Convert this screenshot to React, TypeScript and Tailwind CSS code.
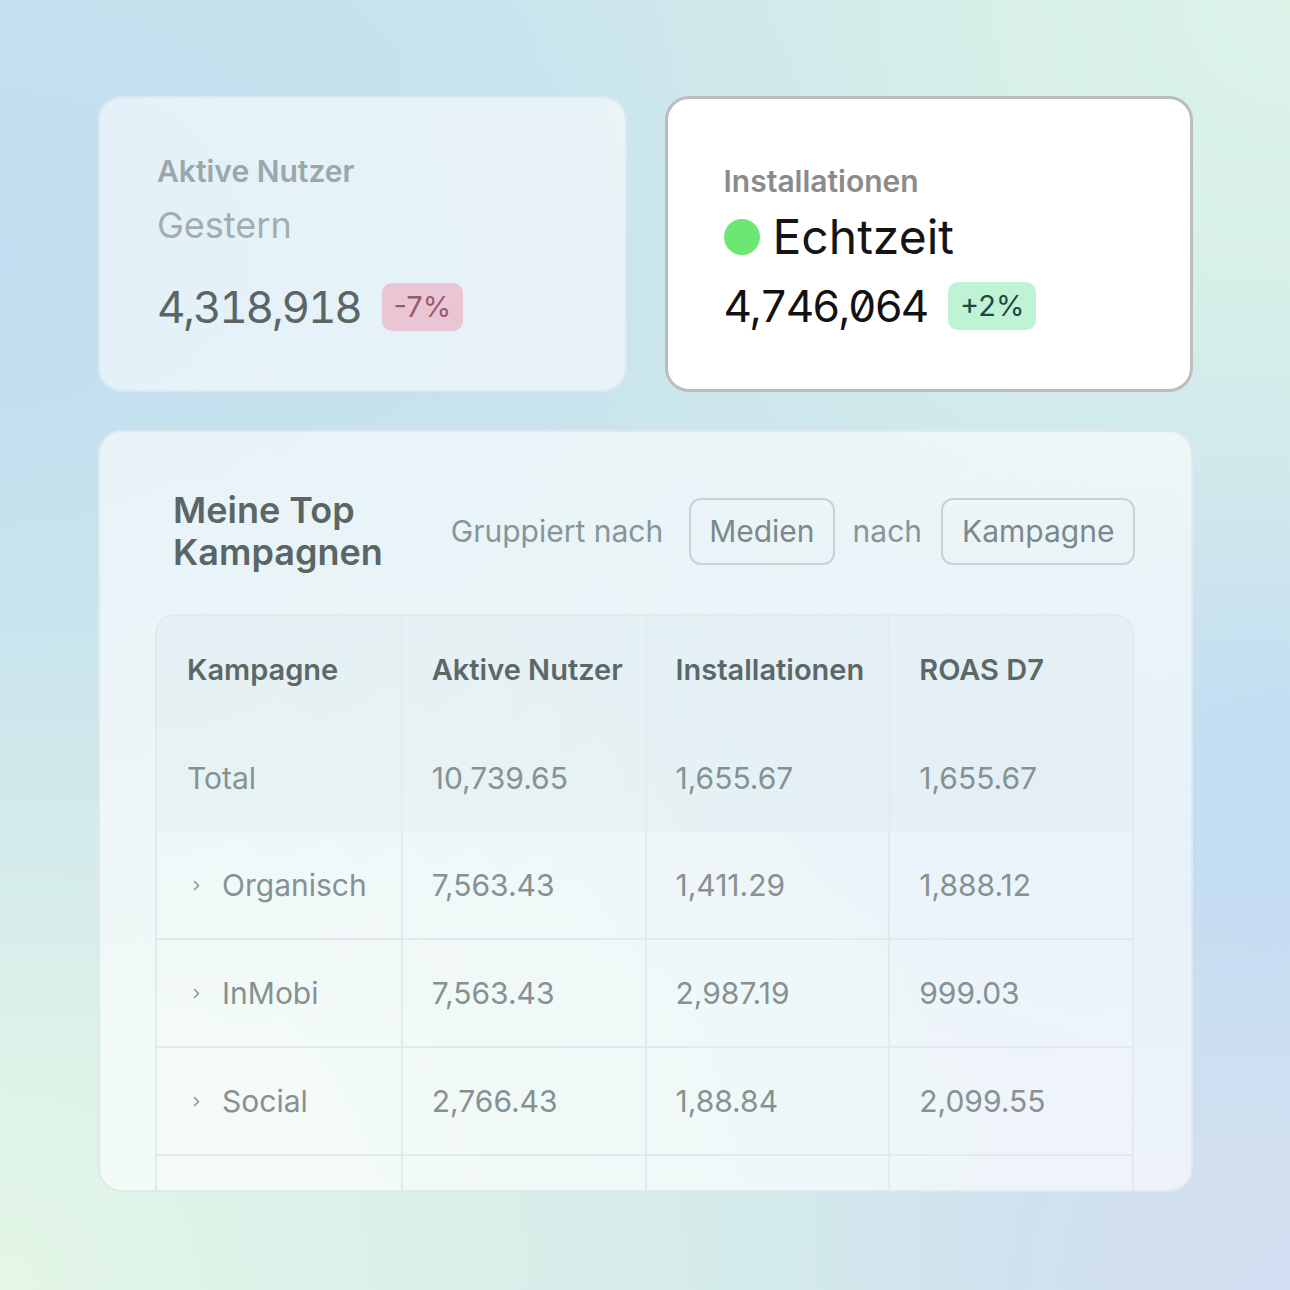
import React from "react";

const Chevron = () => (
  <svg viewBox="0 0 7 11" className="w-[7px] h-[11px] mr-[22px] shrink-0" fill="none">
    <path d="M1.5 1.5 L5.5 5.5 L1.5 9.5" stroke="#8a9597" strokeWidth="1.6" strokeLinecap="round" strokeLinejoin="round" />
  </svg>
);

const rows = [
  { name: "Organisch", a: "7,563.43", b: "1,411.29", c: "1,888.12" },
  { name: "InMobi", a: "7,563.43", b: "2,987.19", c: "999.03" },
  { name: "Social", a: "2,766.43", b: "1,88.84", c: "2,099.55" },
  { name: "", a: "", b: "", c: "" },
];

export default function App() {
  return (
    <div className="w-[1290px] h-[1290px] overflow-hidden font-['Inter',sans-serif] bg-[radial-gradient(ellipse_at_0%_20%,#c1def0_0%,transparent_55%),radial-gradient(ellipse_at_100%_0%,#dbf3e7_0%,transparent_50%),radial-gradient(ellipse_at_0%_100%,#e3f6e7_0%,transparent_55%),radial-gradient(ellipse_at_100%_55%,#bdd7f5_0%,transparent_45%),radial-gradient(ellipse_at_100%_100%,#d3dcf1_0%,transparent_30%),linear-gradient(#cee7ec,#cee7ec)] pt-[96px] pl-[98px] pr-[97px]">
      <div className="grid grid-cols-2 gap-[38px]">
        {/* Card 1 */}
        <div className="h-[296px] rounded-[24px] border-2 border-[#dae9ef] bg-white/55 pl-[57px] pt-[55px] flex flex-col">
          <div className="text-[30px] leading-[36px] font-semibold text-[#9ca7aa]">Aktive Nutzer</div>
          <div className="mt-[14px] text-[36px] leading-[44px] text-[#a3adb0]">Gestern</div>
          <div className="mt-[36px] flex items-center">
            <span className="text-[44px] leading-[48px] tracking-[-0.05em] tabular-nums text-[#5b6566]">4,318,918</span>
            <span className="ml-[21px] h-[48px] px-[12px] rounded-[10px] bg-[#eac5d3] text-[#9b5a72] text-[29px] flex items-center">-7%</span>
          </div>
        </div>
        {/* Card 2 */}
        <div className="h-[296px] rounded-[24px] border-[3px] border-[#bdbdbd] bg-white pl-[56px] pt-[64px] flex flex-col">
          <div className="text-[30px] leading-[36px] font-semibold text-[#8b8b8b]">Installationen</div>
          <div className="mt-[10px] flex items-center">
            <span className="w-[36px] h-[36px] rounded-full bg-[#6ce872] mr-[13px]" />
            <span className="text-[48px] leading-[56px] text-[#151515]">Echtzeit</span>
          </div>
          <div className="mt-[17px] flex items-center">
            <span className="text-[44px] leading-[48px] tracking-[-0.05em] tabular-nums slashed-zero text-[#121212]">4,746,064</span>
            <span className="ml-[21px] h-[48px] px-[12px] rounded-[10px] bg-[#bff3d6] text-[#1d4a3e] text-[29px] flex items-center">+2%</span>
          </div>
        </div>
      </div>

      {/* Main card */}
      <div className="mt-[38px] h-[762px] overflow-hidden rounded-[24px] border-2 border-[#dde9ee] bg-white/60 pl-[55px] pr-[57px] pt-[57px]">
        <div className="flex items-center pl-[18px] whitespace-nowrap">
          <div className="shrink-0 text-[36px] leading-[42px] font-semibold text-[#5a6666]">
            Meine Top
            <br />
            Kampagnen
          </div>
          <span className="shrink-0 ml-[68px] text-[30px] text-[#87949a]">Gruppiert nach</span>
          <span className="shrink-0 ml-[26px] h-[67px] px-[18px] rounded-[12px] border-2 border-[#c6d2d5] text-[30px] text-[#7b898c] flex items-center">Medien</span>
          <span className="shrink-0 ml-[18px] text-[30px] text-[#87949a]">nach</span>
          <span className="shrink-0 ml-[19px] h-[67px] px-[19px] rounded-[12px] border-2 border-[#c6d2d5] text-[30px] text-[#7b898c] flex items-center">Kampagne</span>
        </div>

        <div className="mt-[41px] rounded-t-[20px] border-2 border-b-0 border-[#e1ebee] overflow-hidden">
          <div className="bg-[#d7e6ec]/25">
            <div className="grid grid-cols-4 h-[108px] text-[29px] font-semibold text-[#5c6868]">
              <div className="flex items-center pl-[30px]">Kampagne</div>
              <div className="flex items-center pl-[29px] border-l-2 border-[#e1ebee]/70">Aktive Nutzer</div>
              <div className="flex items-center pl-[29px] border-l-2 border-[#e1ebee]/70">Installationen</div>
              <div className="flex items-center pl-[29px] border-l-2 border-[#e1ebee]/70">ROAS D7</div>
            </div>
            <div className="grid grid-cols-4 h-[108px] text-[30px] text-[#869193]">
              <div className="flex items-center pl-[30px]">Total</div>
              <div className="flex items-center pl-[29px] border-l-2 border-[#e1ebee]/70">10,739.65</div>
              <div className="flex items-center pl-[29px] border-l-2 border-[#e1ebee]/70">1,655.67</div>
              <div className="flex items-center pl-[29px] border-l-2 border-[#e1ebee]/70">1,655.67</div>
            </div>
          </div>
          {rows.map((r, i) => (
            <div key={i} className="grid grid-cols-4 h-[108px] text-[30px] text-[#869193] border-b-2 border-[#e1ebee] bg-white/15">
              <div className="flex items-center pl-[36px]">
                {r.name && <Chevron />}
                {r.name}
              </div>
              <div className="flex items-center pl-[29px] border-l-2 border-[#e1ebee]">{r.a}</div>
              <div className="flex items-center pl-[29px] border-l-2 border-[#e1ebee]">{r.b}</div>
              <div className="flex items-center pl-[29px] border-l-2 border-[#e1ebee]">{r.c}</div>
            </div>
          ))}
        </div>
      </div>
    </div>
  );
}
